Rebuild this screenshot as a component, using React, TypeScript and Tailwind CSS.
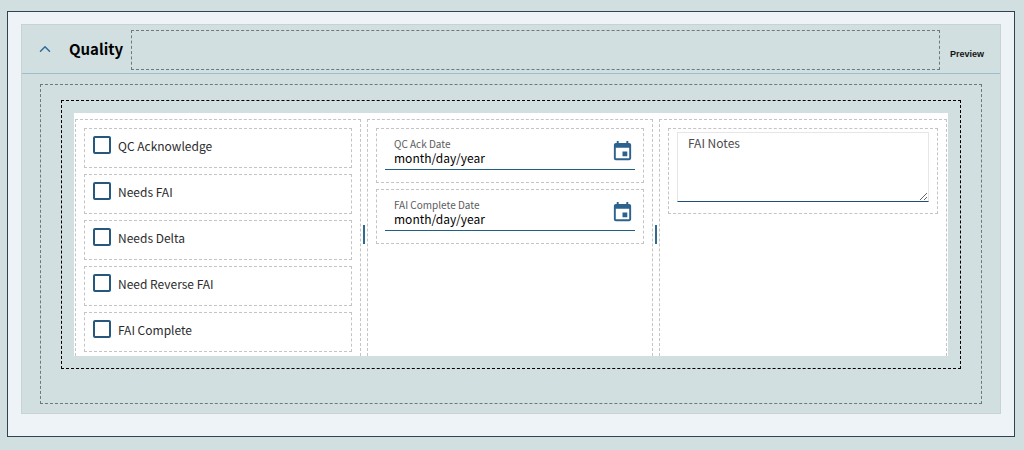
import { ChevronUp } from "lucide-react";
import { MdEvent } from "react-icons/md";

const checks = ["QC Acknowledge", "Needs FAI", "Needs Delta", "Need Reverse FAI", "FAI Complete"];
const dates = ["QC Ack Date", "FAI Complete Date"];

const toId = (label: string) => label.toLowerCase().replace(/\s+/g, "-");

function CheckField({ label }: { label: string }) {
  const id = toId(label);
  return (
    <div className="flex h-10 items-start border border-dashed border-[#c4c4c6] px-2 pt-[7px]">
      <input
        id={id}
        type="checkbox"
        className="size-[18px] shrink-0 appearance-none rounded-xs border-2 border-[#26587f] bg-white checked:bg-[#26587f]"
      />
      <label htmlFor={id} className="ml-[7px] text-[12px] leading-5 text-[#2c2c2e]">
        {label}
      </label>
    </div>
  );
}

function DateField({ label }: { label: string }) {
  const id = toId(label);
  return (
    <div className="h-[55px] border border-dashed border-[#c4c4c6] px-2">
      <div className="flex h-[41px] items-start border-b border-[#1f5f85] pr-px pl-[9px]">
        <div className="min-w-0 flex-1 pt-[9px]">
          <label htmlFor={id} className="block text-[10px] leading-3 text-[#5c5c5e]">
            {label}
          </label>
          <input
            id={id}
            type="text"
            placeholder="month/day/year"
            className="block h-4 w-full bg-transparent text-[12px] leading-4 text-black outline-none placeholder:text-black"
          />
        </div>
        <button type="button" aria-label={`Choose ${label}`} className="mt-[11px] text-[#2c628c]">
          <MdEvent size={23} />
        </button>
      </div>
    </div>
  );
}

function Column({ children }: { children: React.ReactNode }) {
  return (
    <div className="mt-[6px] flex min-w-0 flex-col gap-[6px] border border-b-0 border-dashed border-[#c4c4c6] px-2 pt-2 pb-1">
      {children}
    </div>
  );
}

function Divider() {
  return <div className="h-[19px] w-[2px] self-center justify-self-center bg-[#2f6c90]" />;
}

export default function App() {
  return (
    <main className="min-h-screen bg-[#d1dfe0] pt-[11px] pr-[9px] pb-[13px] pl-[7px] font-['Noto_Sans_CJK_SC',sans-serif]">
      <div className="border border-[#2b4450] bg-[#eef3f8] px-[13px] pt-3 pb-[22px]">
        <section className="border border-[#c8d2d6] bg-[#d1dfe0]">
          <header className="flex h-[49px] items-center border-b border-[#9dbdca] pr-4 pl-[14px]">
            <button type="button" aria-label="Collapse Quality" className="text-[#2f6c98]">
              <ChevronUp size={18} strokeWidth={2} />
            </button>
            <h2 className="ml-[15px] text-[15px] leading-6 font-bold text-black">Quality</h2>
            <div className="ml-2 mt-[2px] h-10 flex-1 border border-dashed border-[#6c7a7e]" />
            <button type="button" className="ml-[10px] pt-[10px] font-['Liberation_Sans',sans-serif] text-[9px] leading-3 font-bold text-[#141414]">
              Preview
            </button>
          </header>

          <div className="px-[18px] pt-[10px] pb-[9px]">
            <div className="border border-dashed border-[#6c7a7e] px-5 pt-[15px] pb-[34px]">
              <div className="border border-dashed border-black p-3">
                <div className="grid grid-cols-[minmax(0,286fr)_6px_minmax(0,286fr)_6px_minmax(0,288fr)] bg-white px-px">
                  <Column>
                    {checks.map((label) => (
                      <CheckField key={label} label={label} />
                    ))}
                  </Column>
                  <Divider />
                  <Column>
                    {dates.map((label) => (
                      <DateField key={label} label={label} />
                    ))}
                  </Column>
                  <Divider />
                  <Column>
                    <div className="border border-dashed border-[#c4c4c6] px-2 pt-[3px] pb-[11px]">
                      <textarea
                        aria-label="FAI Notes"
                        placeholder="FAI Notes"
                        className="block h-[70px] w-full resize border border-[#e6e6e8] border-b-[#1f4f78] px-[10px] text-[12px] leading-5 text-black outline-none placeholder:text-[#4c4c4e]"
                      />
                    </div>
                  </Column>
                </div>
              </div>
            </div>
          </div>
        </section>
      </div>
    </main>
  );
}
